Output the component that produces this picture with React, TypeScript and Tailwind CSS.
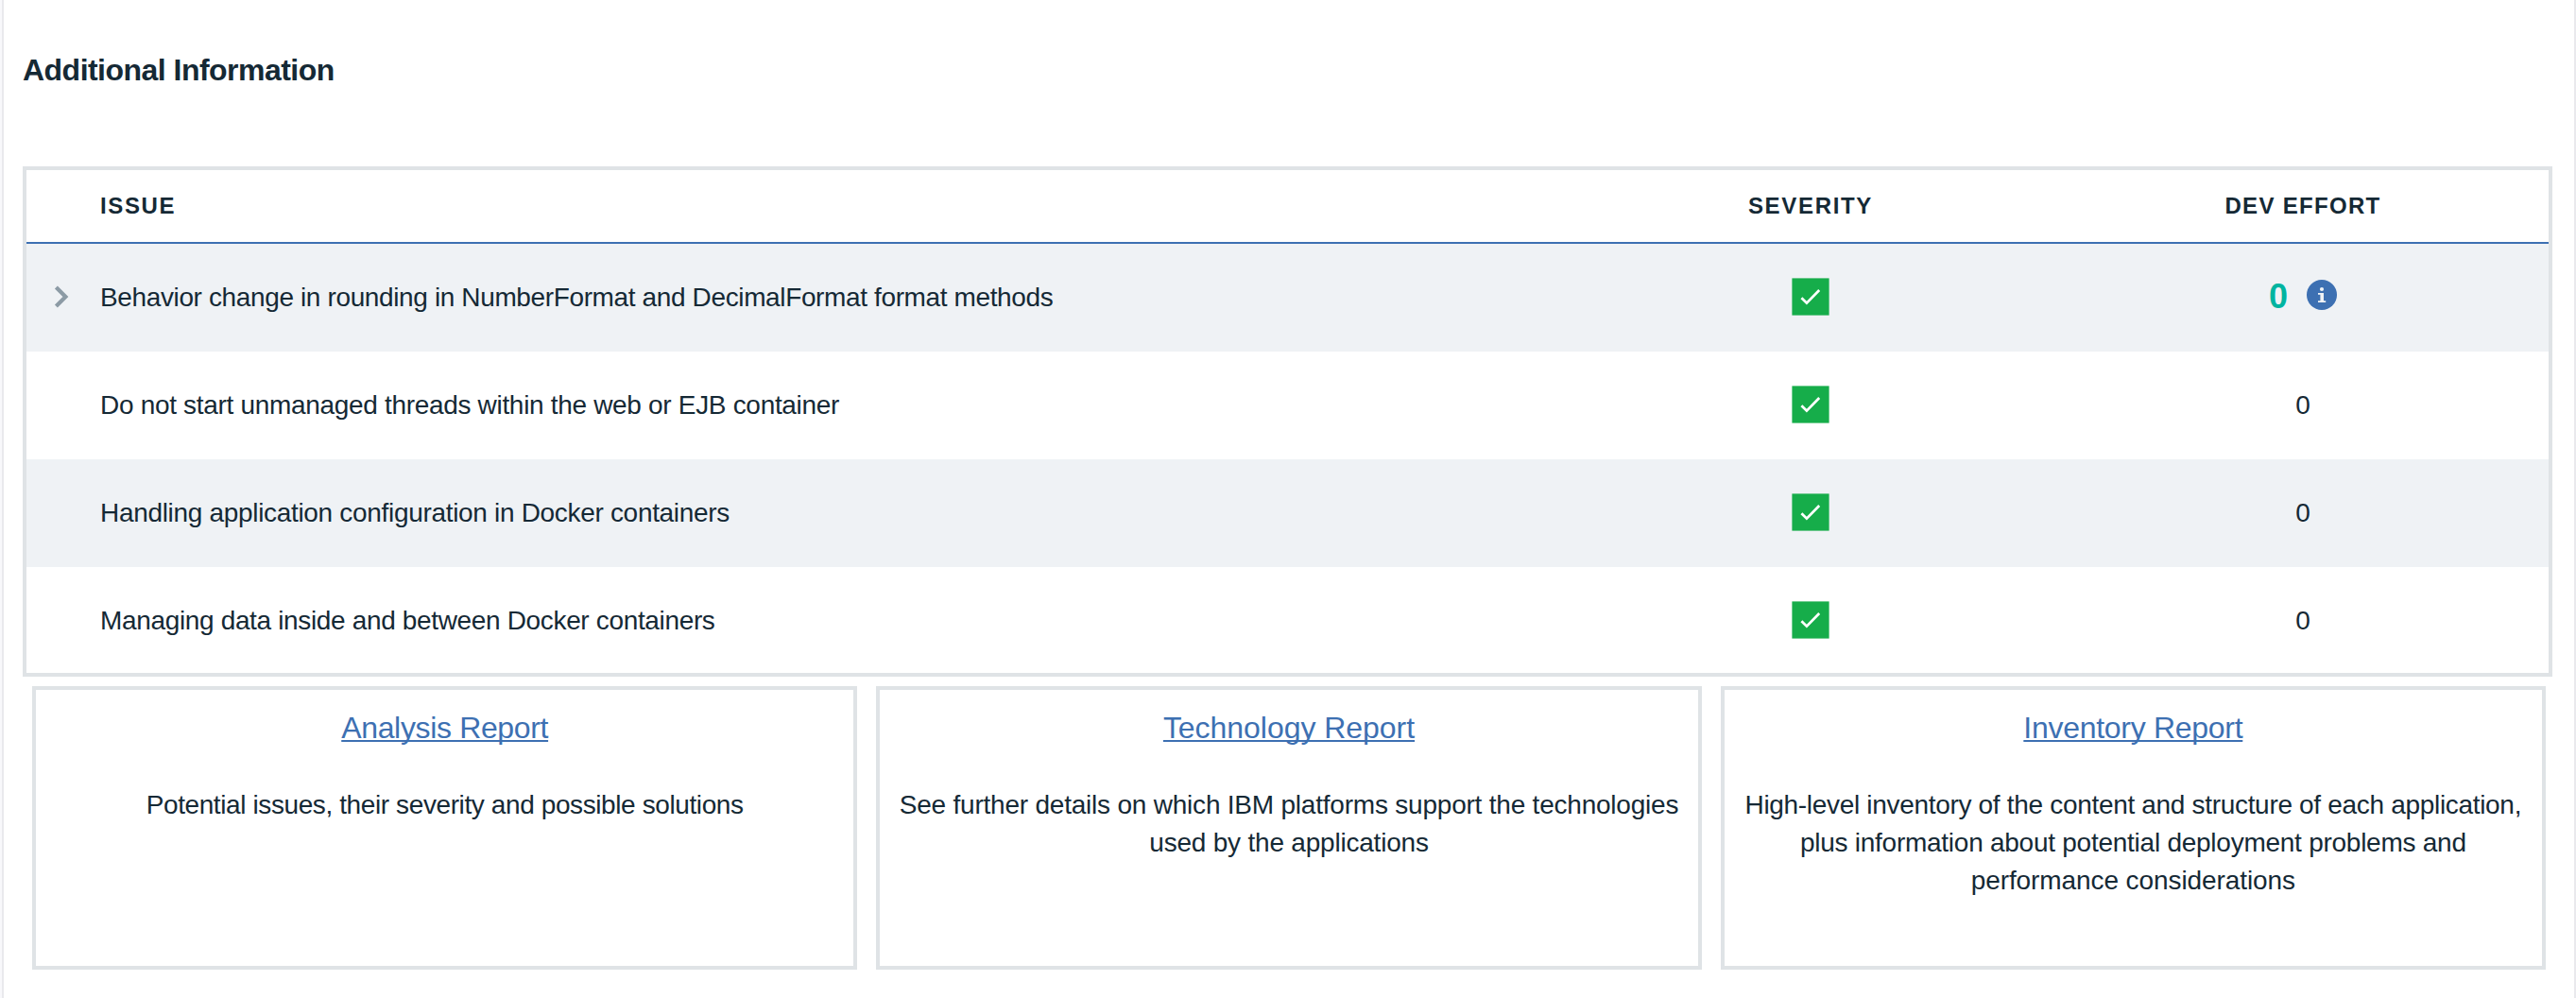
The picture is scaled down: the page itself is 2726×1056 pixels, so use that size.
const SANS = "font-['Liberation_Sans',Arial,sans-serif]";

type Issue = {
  title: string;
  tracking: string;
  expandable?: boolean;
};

const issues: Issue[] = [
  {
    title: "Behavior change in rounding in NumberFormat and DecimalFormat format methods",
    tracking: "tracking-[-0.37px]",
    expandable: true,
  },
  {
    title: "Do not start unmanaged threads within the web or EJB container",
    tracking: "tracking-[-0.315px]",
  },
  {
    title: "Handling application configuration in Docker containers",
    tracking: "tracking-[-0.315px]",
  },
  {
    title: "Managing data inside and between Docker containers",
    tracking: "tracking-[-0.345px]",
  },
];

const reports = [
  {
    name: "Analysis Report",
    tracking: "tracking-[-0.35px]",
    lines: [
      { text: "Potential issues, their severity and possible solutions", tracking: "tracking-[-0.395px]" },
    ],
  },
  {
    name: "Technology Report",
    tracking: "tracking-[-0.04px]",
    lines: [
      {
        text: "See further details on which IBM platforms support the technologies",
        tracking: "tracking-[-0.215px]",
      },
      { text: "used by the applications", tracking: "tracking-[-0.21px]" },
    ],
  },
  {
    name: "Inventory Report",
    tracking: "tracking-[-0.29px]",
    lines: [
      {
        text: "High-level inventory of the content and structure of each application,",
        tracking: "tracking-[-0.315px]",
      },
      {
        text: "plus information about potential deployment problems and",
        tracking: "tracking-[-0.255px]",
      },
      { text: "performance considerations", tracking: "tracking-[-0.09px]" },
    ],
  },
];

function Chevron() {
  return (
    <svg className="h-6 w-4" viewBox="0 0 16 24" fill="none">
      <path d="M2.4 2 12.4 12 2.4 22" stroke="#8c9ba5" strokeWidth="4.2" />
    </svg>
  );
}

function SeverityCheck() {
  return (
    <svg className="h-10 w-10" viewBox="0 0 40 40" fill="none">
      <rect x="0.4" y="0.4" width="39.2" height="39.2" fill="#16ad4a" />
      <path d="M10.4 21.2 15.9 26.7 29.2 13" stroke="#fff" strokeWidth="2.7" />
    </svg>
  );
}

function InfoIcon() {
  return (
    <svg className="h-8 w-8" viewBox="0 0 32 32">
      <circle cx="16" cy="16" r="16" fill="#3d70b2" />
      <circle cx="16" cy="10" r="2.1" fill="#eff2f5" />
      <path d="M12 14h6v8.2h2.2V24h-8.2v-1.8h2.4v-6.4H12z" fill="#eff2f5" />
    </svg>
  );
}

function IssueTable() {
  return (
    <div className="h-[540px] w-[2677px] overflow-hidden border-4 border-[#dfe3e6]">
      <div className="flex h-[78px] items-center border-b-2 border-[#3d70b2] text-[24px] font-bold">
        <div className="flex-1 pl-[78px] tracking-[1.62px]">ISSUE</div>
        <div className="w-[522px] text-center tracking-[1.68px]">SEVERITY</div>
        <div className="w-[520px] text-center tracking-[1.3px]">DEV EFFORT</div>
      </div>
      {issues.map((issue) => (
        <div key={issue.title} className="flex h-[114px] items-center text-[28px] odd:bg-white even:bg-[#eff2f5]">
          <div className="flex w-[78px] pb-[2px] pl-[29px]">{issue.expandable && <Chevron />}</div>
          <div className={`flex-1 whitespace-nowrap ${issue.tracking}`}>{issue.title}</div>
          <div className="flex w-[522px] justify-center pb-[2px]">
            <SeverityCheck />
          </div>
          <div className="flex w-[520px] items-center justify-center">
            {issue.expandable ? (
              <>
                <span className="pb-[2px] text-[36px] leading-[40px] font-bold text-[#00b4a0]">0</span>
                <span className="ml-[20px] pb-[6px]">
                  <InfoIcon />
                </span>
              </>
            ) : (
              <span>0</span>
            )}
          </div>
        </div>
      ))}
    </div>
  );
}

function ReportCards() {
  return (
    <div className="mt-[10px] ml-[10px] grid w-[2660px] grid-cols-3 gap-5">
      {reports.map((report) => (
        <section key={report.name} className="h-[300px] border-4 border-[#dfe3e6] pt-[20px] text-center">
          <h2 className="text-[32px] leading-[40px]">
            <a
              href="#"
              className={`text-[#3d70b2] underline decoration-2 underline-offset-[2px] [text-decoration-skip-ink:none] ${report.tracking}`}
            >
              {report.name}
            </a>
          </h2>
          <p className="mt-[42px] text-[28px] leading-[40px] whitespace-nowrap">
            {report.lines.map((line) => (
              <span key={line.text} className={`block ${line.tracking}`}>
                {line.text}
              </span>
            ))}
          </p>
        </section>
      ))}
    </div>
  );
}

export default function App() {
  return (
    <div className={`flex h-[1056px] w-[2726px] bg-[#f8f8fb] pl-[2px] text-[#152935] ${SANS}`}>
      <main className="flex-1 border-x-2 border-[#e9e9ed] bg-white pl-[20px]">
        <h1 className="mt-[54px] text-[32px] leading-[40px] font-bold tracking-[-0.526px]">Additional Information</h1>
        <div className="mt-[82px]">
          <IssueTable />
          <ReportCards />
        </div>
      </main>
    </div>
  );
}
